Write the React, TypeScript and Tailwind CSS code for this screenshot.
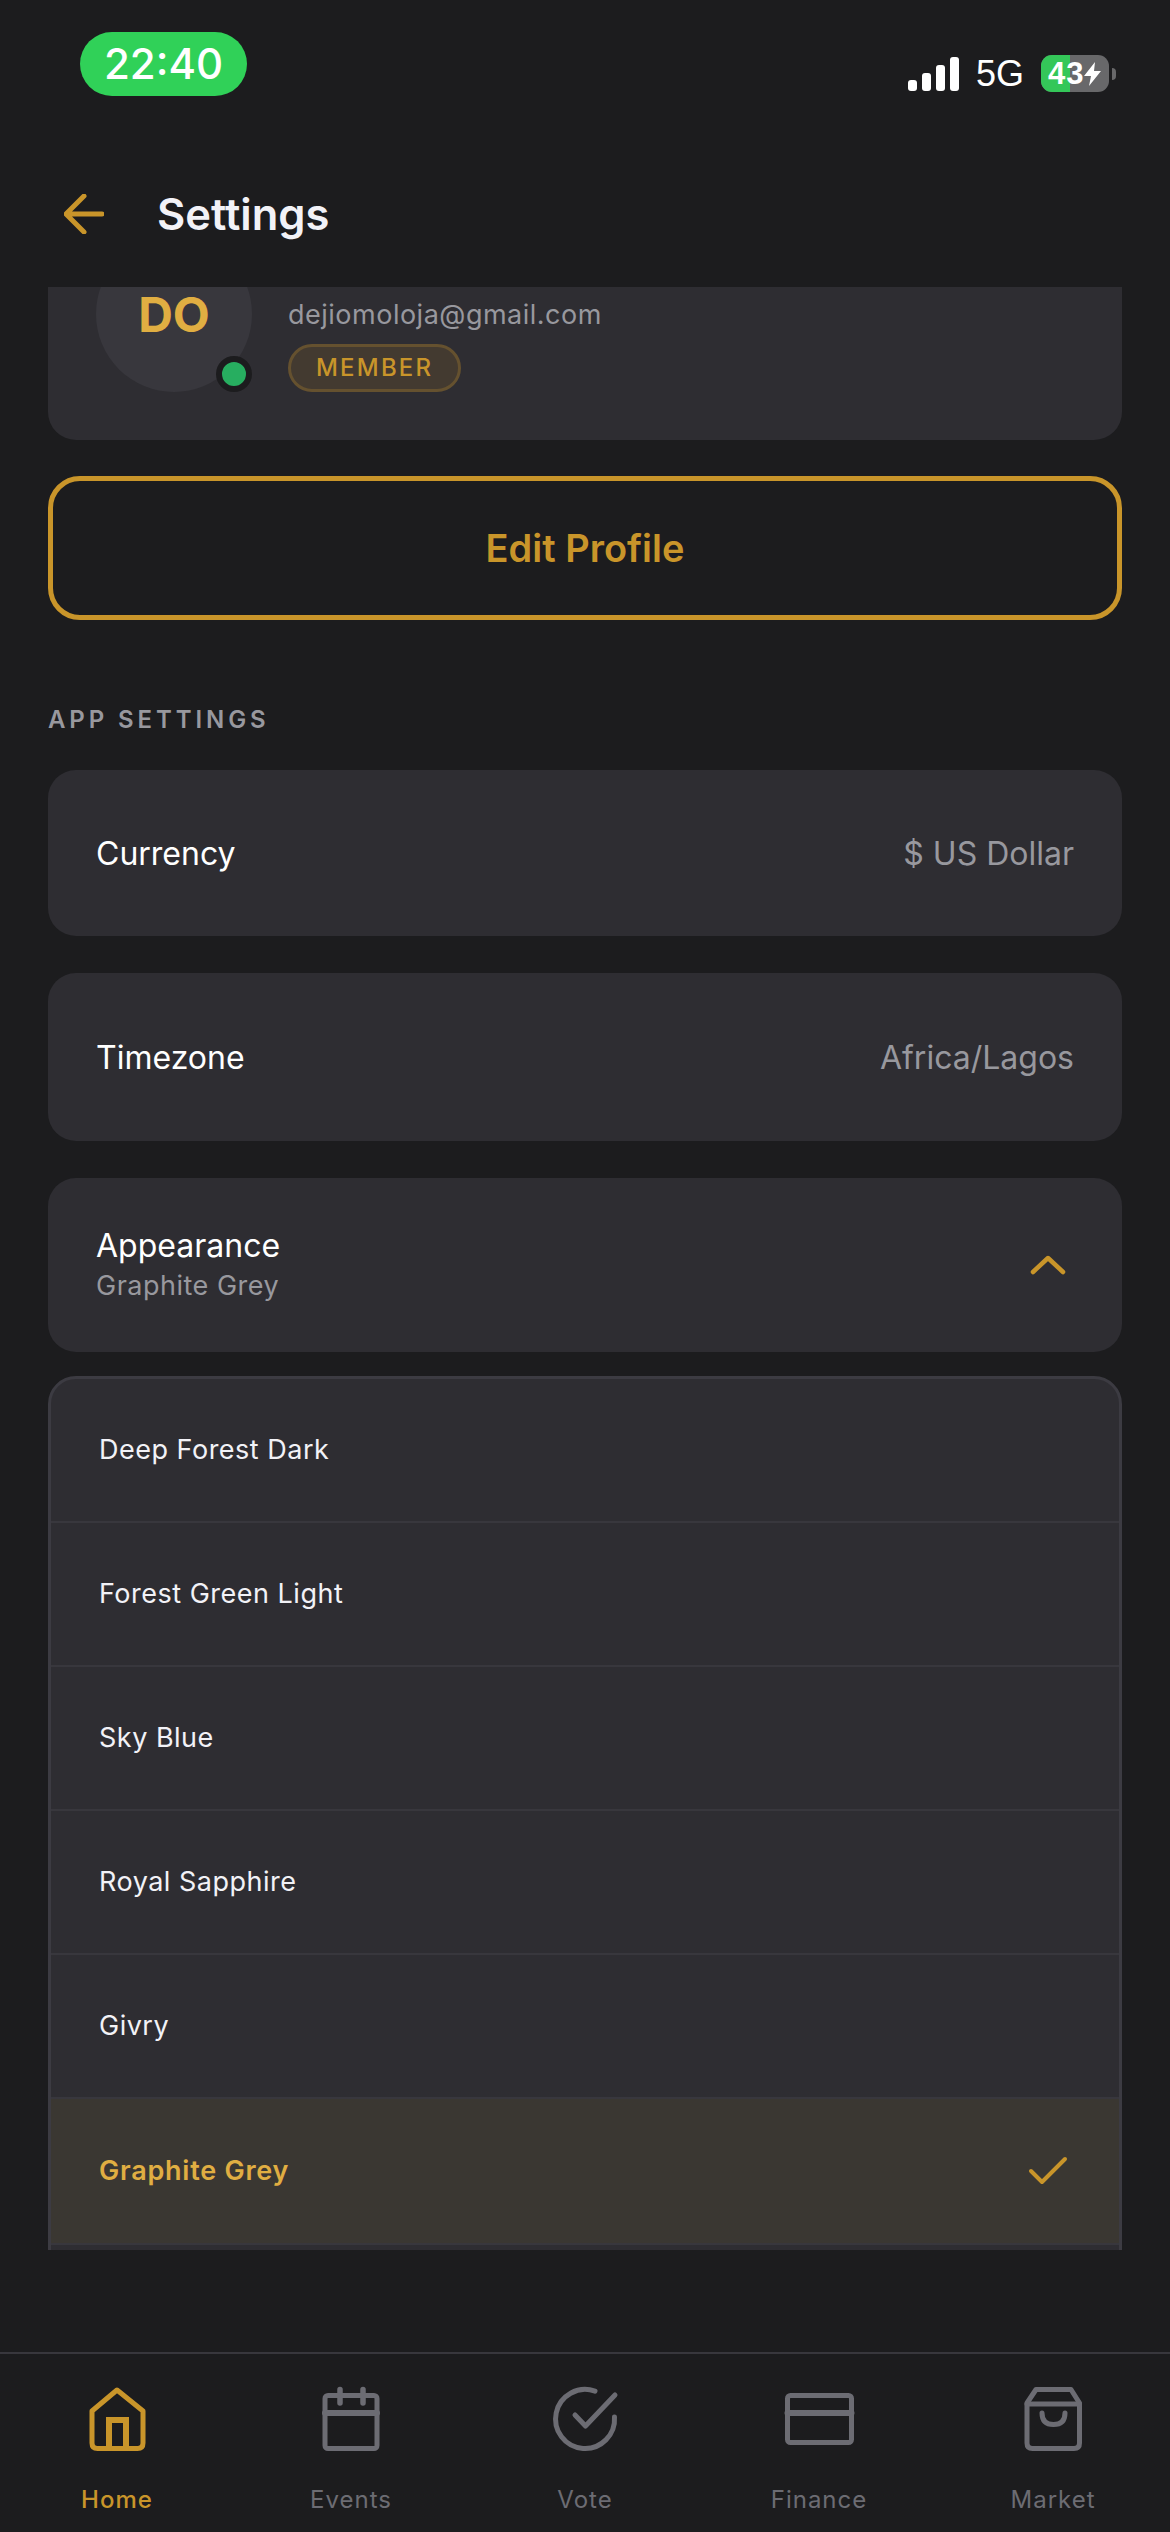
const themes = ["Deep Forest Dark", "Forest Green Light", "Sky Blue", "Royal Sapphire", "Givry"];

const tabs = [
  { label: "Home", active: true },
  { label: "Events" },
  { label: "Vote" },
  { label: "Finance" },
  { label: "Market" },
];

const TabIcon = ({ name }: { name: string }) => (
  <svg
    viewBox="0 0 72 72"
    className="w-[72px] h-[72px]"
    fill="none"
    stroke="currentColor"
    strokeWidth="5"
    strokeLinecap="round"
    strokeLinejoin="round"
  >
    {name === "Home" && (
      <>
        <path d="M36 7 L11 28 V60 Q11 65.5 16.5 65.5 H56.5 Q62 65.5 62 60 V28 Z" />
        <path d="M28 65 V37 H45 V65" strokeLinejoin="miter" strokeWidth="6" />
      </>
    )}
    {name === "Events" && (
      <>
        <rect x="10" y="12.5" width="52" height="53" rx="3" />
        <path d="M10 30 H62" strokeWidth="6" />
        <path d="M25 6.5 V20 M48 6.5 V20" strokeWidth="5.5" />
      </>
    )}
    {name === "Vote" && (
      <>
        <path d="M46 8.2 A29.5 29.5 0 1 0 65.5 34" />
        <path d="M26 32 L36.5 43 L66 12" />
      </>
    )}
    {name === "Finance" && (
      <>
        <rect x="4.5" y="12.5" width="64" height="47" rx="3" />
        <path d="M4.5 30 H68.5" strokeWidth="6" />
      </>
    )}
    {name === "Market" && (
      <>
        <path d="M19 6.5 H54 L62.5 20 V60 Q62.5 65.5 57 65.5 H15.500 Q10 65.500 10 60 V20 Z" />
        <path d="M10 21 H62.500" />
        <path d="M25 30 Q25 41.500 36.500 41.500 Q48 41.500 48 30" />
      </>
    )}
  </svg>
);

const App = () => {
  return (
    <div className="w-[1170px] h-[2532px] flex flex-col overflow-hidden bg-[#1c1c1e] font-['Inter',sans-serif] text-white">
      <div className="h-[140px] shrink-0 flex items-start justify-between pl-[80px] pr-[54px]">
        <div className="mt-[32px] w-[167px] h-[64px] rounded-[32px] bg-[#30d158] flex items-center justify-center text-[42px] font-medium leading-none">
          22:40
        </div>
        <div className="mt-[55px] flex items-center font-['Liberation_Sans',sans-serif]">
          <svg viewBox="0 0 51 34" className="w-[51px] h-[34px] mr-[17px]" fill="white">
            <rect x="0" y="23" width="9" height="11" rx="3" />
            <rect x="14" y="16" width="9" height="18" rx="3" />
            <rect x="28" y="8" width="9" height="26" rx="3" />
            <rect x="42" y="0" width="9" height="34" rx="3" />
          </svg>
          <span className="text-[36px] leading-none mr-[17px]">5G</span>
          <div className="relative w-[68px] h-[37px] rounded-[11px] overflow-hidden bg-[#68686a] flex items-center pl-[7px] text-[31px] font-bold leading-none">
            <div className="absolute left-0 top-0 bottom-0 w-[29px] bg-[#34c759]" />
            <span className="relative tracking-[1px]">43</span>
            <svg viewBox="0 0 17 24" className="relative w-[17px] h-[24px]" fill="white">
              <path d="M11 0 L0 14 H7 L5 24 L17 9 H10 Z" />
            </svg>
          </div>
          <div className="w-[4px] h-[12px] ml-[3px] rounded-r-full bg-[#68686a]" />
        </div>
      </div>

      <div className="h-[147px] shrink-0 flex items-center pl-[64px]">
        <svg viewBox="0 0 40 40" className="w-[40px] h-[40px] mr-[53px]" fill="none" stroke="#c9952a" strokeWidth="5" strokeLinecap="round" strokeLinejoin="round">
          <path d="M38 20 H3 M20 2 L2 20 L20 38" />
        </svg>
        <h1 className="text-[43.5px] leading-[50px] font-semibold text-[#f2f2f7]">Settings</h1>
      </div>

      <div className="h-[1963px] shrink-0 overflow-hidden px-[48px]">
        <div className="-mt-[99px] flex flex-col">
          <div className="h-[252px] rounded-[28px] bg-[#2e2d32] p-[48px] flex gap-[36px]">
            <div className="relative w-[156px] h-[156px] rounded-full bg-[#38373d] flex items-center justify-center">
              <span className="text-[48px] font-bold text-[#e0ae42] leading-none pt-[2px]">DO</span>
              <div className="absolute right-0 bottom-0 w-[36px] h-[36px] rounded-full bg-[#27ae60] border-[6px] border-[#1c1c1e]" />
            </div>
            <div className="flex flex-col justify-end items-start gap-[9px]">
              <span className="text-[27px] leading-[40px] tracking-[0.5px] text-[#98989e]">dejiomoloja@gmail.com</span>
              <span className="h-[48px] px-[25px] flex items-center rounded-full bg-[#433a30] border-[3px] border-[#65512f] text-[24px] font-medium tracking-[2.2px] text-[#c9952a]">
                MEMBER
              </span>
            </div>
          </div>

          <button className="mt-[36px] h-[144px] rounded-[32px] border-[5px] border-[#c9952a] text-[38px] font-semibold text-[#c9952a]">
            Edit Profile
          </button>

          <div className="mt-[85px] text-[24px] leading-[30px] font-semibold tracking-[3.9px] text-[#98989e]">APP SETTINGS</div>

          <div className="mt-[35px] h-[166px] pt-[2px] rounded-[28px] bg-[#2e2d32] px-[48px] flex items-center justify-between text-[32px]">
            <span>Currency</span>
            <span className="text-[#98989e]">$ US Dollar</span>
          </div>

          <div className="mt-[37px] h-[168px] pt-[2px] rounded-[28px] bg-[#2e2d32] px-[48px] flex items-center justify-between text-[32px]">
            <span>Timezone</span>
            <span className="text-[#98989e]">Africa/Lagos</span>
          </div>

          <div className="mt-[37px] h-[174px] rounded-[28px] bg-[#2e2d32] px-[48px] flex items-center justify-between">
            <div className="flex flex-col">
              <span className="text-[32px] leading-[40px]">Appearance</span>
              <span className="mt-[2px] text-[27px] leading-[36px] tracking-[0.5px] text-[#98989e]">Graphite Grey</span>
            </div>
            <svg viewBox="0 0 36 20" className="w-[36px] h-[20px] mr-[8px]" fill="none" stroke="#c9952a" strokeWidth="4.500" strokeLinecap="round" strokeLinejoin="round">
              <path d="M3 17 L18 3 L33 17" />
            </svg>
          </div>

          <div className="mt-[24px] rounded-t-[28px] border-[3px] border-[#3c3b42] bg-[#2e2d32] pb-[144px]">
            {themes.map((theme) => (
              <div key={theme} className="h-[144px] px-[48px] flex items-center border-b-[2px] border-[#38373d] text-[27px] tracking-[0.5px] text-[#f2f2f7]">
                {theme}
              </div>
            ))}
            <div className="h-[146px] px-[48px] flex items-center justify-between bg-[#3a3732] border-b-[2px] border-[#38373d]">
              <span className="text-[27px] font-semibold tracking-[0.75px] text-[#e0ae42]">Graphite Grey</span>
              <svg viewBox="0 0 40 30" className="w-[40px] h-[30px] mr-[3px]" fill="none" stroke="#c9952a" strokeWidth="4" strokeLinecap="round" strokeLinejoin="round">
                <path d="M3 15 L14 26 L37 3" />
              </svg>
            </div>
          </div>
        </div>
      </div>

      <div className="flex-1" />

      <nav className="h-[180px] shrink-0 grid grid-cols-5 border-t-[2px] border-[#38373d]">
        {tabs.map((tab) => (
          <div key={tab.label} className={`flex flex-col items-center pt-[29px] ${tab.active ? "text-[#c9952a]" : "text-[#6c6c73]"}`}>
            <TabIcon name={tab.label} />
            <span className={`mt-[30px] text-[24px] leading-[30px] tracking-[1px] ${tab.active ? "font-medium" : "font-normal"}`}>{tab.label}</span>
          </div>
        ))}
      </nav>
    </div>
  );
};

export default App;
